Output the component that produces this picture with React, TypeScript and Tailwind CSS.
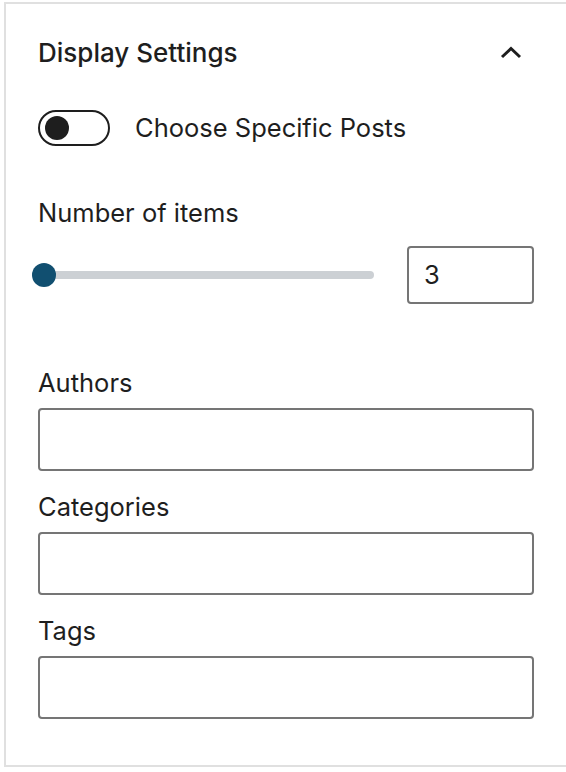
import React from "react";

function Field({ label, first }: { label: string; first?: boolean }) {
  return (
    <div className={first ? "mt-[63px]" : "mt-[20px]"}>
      <div className="h-[32px] flex items-center text-[25.5px] text-[#1e1e1e]">{label}</div>
      <input
        type="text"
        className="mt-[9px] block h-[63px] w-full rounded-[4px] border-2 border-[#757575] bg-white px-4 text-[25.5px] outline-none"
      />
    </div>
  );
}

export default function App() {
  return (
    <div
      className="min-h-screen bg-white pt-[2px]"
      style={{ fontFamily: "Inter, 'Noto Sans', sans-serif" }}
    >
      <div className="ml-[4px] border-l-2 border-t-2 border-b-2 border-[#e0e0e0] pl-[32px] pr-[32px] pb-[46px] text-[#1e1e1e]">
        {/* header */}
        <div className="flex h-[96px] items-center justify-between">
          <h2 className="text-[26px] font-medium">Display Settings</h2>
          <svg width="24" height="16" viewBox="0 0 24 16" className="mr-[11px]" fill="none">
            <path d="M3 13 L12 4.5 L21 13" stroke="#1e1e1e" strokeWidth="3" />
          </svg>
        </div>

        {/* toggle */}
        <div className="mt-[10px] flex h-[36px] items-center gap-[25px]">
          <span className="relative block h-[36px] w-[72px] rounded-full border-2 border-[#1e1e1e] bg-white">
            <span className="absolute left-[5px] top-[4px] h-[24px] w-[24px] rounded-full bg-[#1e1e1e]" />
          </span>
          <span className="text-[25.5px]">Choose Specific Posts</span>
        </div>

        {/* number of items */}
        <div className="mt-[51px] flex h-[32px] items-center text-[25.5px]">Number of items</div>
        <div className="mt-[17px] flex h-[58px] items-center gap-[33px]">
          <div className="relative flex h-[24px] flex-1 items-center">
            <div className="h-[8px] w-full rounded-full bg-[#ccd0d4]" />
            <span className="absolute left-[-6px] top-0 h-[24px] w-[24px] rounded-full bg-[#114f70]" />
          </div>
          <div className="flex h-[58px] w-[127px] items-center rounded-[4px] border-2 border-[#757575] pl-[15px] text-[25.5px]">
            3
          </div>
        </div>

        <Field label="Authors" first />
        <Field label="Categories" />
        <Field label="Tags" />
      </div>
    </div>
  );
}
